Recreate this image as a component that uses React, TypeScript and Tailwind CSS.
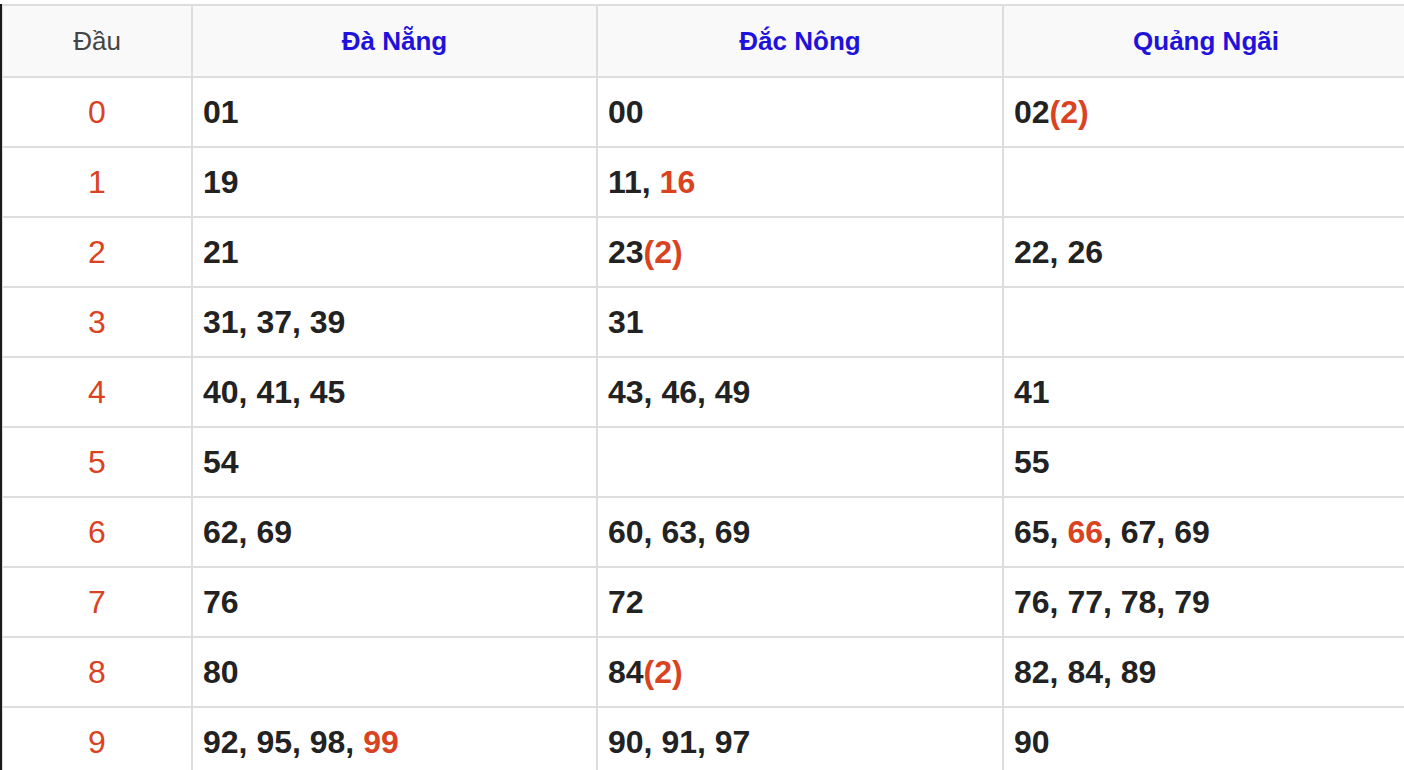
const provinces = ["Đà Nẵng", "Đắc Nông", "Quảng Ngãi"];

// each cell: list of [number, hot?, count?]
type Num = { v: string; hot?: boolean; times?: number };

const rows: Num[][][] = [
  [[{ v: "01" }], [{ v: "00" }], [{ v: "02", times: 2 }]],
  [[{ v: "19" }], [{ v: "11" }, { v: "16", hot: true }], []],
  [[{ v: "21" }], [{ v: "23", times: 2 }], [{ v: "22" }, { v: "26" }]],
  [[{ v: "31" }, { v: "37" }, { v: "39" }], [{ v: "31" }], []],
  [[{ v: "40" }, { v: "41" }, { v: "45" }], [{ v: "43" }, { v: "46" }, { v: "49" }], [{ v: "41" }]],
  [[{ v: "54" }], [], [{ v: "55" }]],
  [[{ v: "62" }, { v: "69" }], [{ v: "60" }, { v: "63" }, { v: "69" }], [{ v: "65" }, { v: "66", hot: true }, { v: "67" }, { v: "69" }]],
  [[{ v: "76" }], [{ v: "72" }], [{ v: "76" }, { v: "77" }, { v: "78" }, { v: "79" }]],
  [[{ v: "80" }], [{ v: "84", times: 2 }], [{ v: "82" }, { v: "84" }, { v: "89" }]],
  [[{ v: "92" }, { v: "95" }, { v: "98" }, { v: "99", hot: true }], [{ v: "90" }, { v: "91" }, { v: "97" }], [{ v: "90" }]],
];

function Cell({ nums }: { nums: Num[] }) {
  return (
    <div className="bg-white h-[68px] flex items-center pl-[10px] text-[32px] font-bold text-[#222] whitespace-nowrap">
      {nums.map((n, i) => (
        <span key={i}>
          {i > 0 && ", "}
          <span className={n.hot ? "text-[#d9431f]" : ""}>{n.v}</span>
          {n.times && <span className="text-[#d9431f]">({n.times})</span>}
        </span>
      ))}
    </div>
  );
}

export default function App() {
  return (
    <div className="w-[1404px] h-[770px] overflow-hidden bg-white pt-[4px] flex" style={{ fontFamily: '"Liberation Sans", Arial, sans-serif' }}>
      <div className="w-[2px] bg-[#1a1a1a] shrink-0" />
      <div className="shrink-0 bg-[#ddd] pt-[2px] pl-[1px] grid grid-cols-[188px_403px_404px_404px] gap-[2px] content-start">
        <div className="bg-[#f9f9f9] h-[70px] flex items-center justify-center text-[26px] text-[#444]">Đầu</div>
        {provinces.map((p) => (
          <div key={p} className="bg-[#f9f9f9] h-[70px] flex items-center justify-center text-[26px] font-bold text-[#1f12da]">
            {p}
          </div>
        ))}
        {rows.map((r, i) => (
          <div key={i} className="contents">
            <div className="bg-white h-[68px] flex items-center justify-center text-[32px] text-[#d9431f]">{i}</div>
            {r.map((c, j) => (
              <Cell key={j} nums={c} />
            ))}
          </div>
        ))}
      </div>
    </div>
  );
}
